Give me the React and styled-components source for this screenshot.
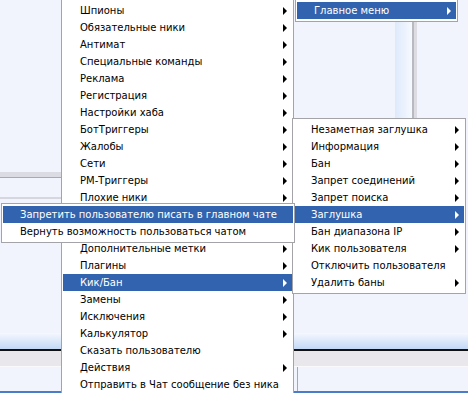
import styled, { createGlobalStyle } from 'styled-components';

const GlobalStyle = createGlobalStyle`
  html, body {
    margin: 0;
    padding: 0;
    background: #f1f4fd;
  }
`;

const Screen = styled.div`
  position: relative;
  width: 468px;
  height: 393px;
  overflow: hidden;
  background: #f1f4fd;
  display: flex;
  flex-direction: column;
  font-family: 'DejaVu Sans', 'Liberation Sans', sans-serif;
  font-size: 10px;
`;

const Workspace = styled.div`
  height: 333px;
  display: flex;
`;

const LeftPane = styled.div`
  width: 297px;
  display: flex;
  flex-direction: column;
`;

const PaneBlock = styled.div`
  height: ${props => props.$h}px;
  background: #f1f4fd;
`;

const Band = styled.div`
  height: 5px;
  background: #dadbe3;
  border-bottom: 1px solid #a9a9b2;
`;

const ThinLine = styled.div`
  height: 2px;
  background: #d6d7de;
`;

const RightPane = styled.div`
  flex: 1;
  display: flex;
  align-items: flex-start;
  padding-left: 98px;
`;

const ScrollStrip = styled.div`
  width: 17px;
  height: 200px;
  background: linear-gradient(to right, #dde9fb, #f6f9ff);
`;

const SplitLine = styled.div`
  width: 2px;
  height: 200px;
  background: #b9b9c1;
  border-right: 3px solid #dcdce2;
`;

const HeaderBar = styled.div`
  height: 16px;
  background: linear-gradient(to bottom, #f5f8fe, #c3d8f5);
  border-bottom: 2px solid #111;
`;

const GrayRow = styled.div`
  height: 15px;
  background: #e9e7ec;
  border-bottom: 1px solid #f9f9fb;
`;

const ListArea = styled.div`
  flex: 1;
  display: flex;
  border-bottom: 2px solid #4a7cc8;
`;

const ListColumn = styled.div`
  width: 297px;
  border-right: 1px solid #a8a8b4;
`;

const Menu = styled.div`
  position: absolute;
  left: ${props => props.$x}px;
  top: ${props => props.$y}px;
  width: ${props => props.$w}px;
  box-sizing: border-box;
  background: #ffffff;
  border: 1px solid #a3a3a8;
  padding: 2px 1px;
  display: flex;
  flex-direction: column;
  z-index: ${props => props.$z};
`;

const Item = styled.div`
  height: 17px;
  display: flex;
  align-items: center;
  justify-content: space-between;
  padding: 0 5px 0 17px;
  color: ${props => (props.$active ? '#ffffff' : '#000000')};
  background: ${props => (props.$active ? '#3263ae' : 'transparent')};
  white-space: nowrap;
`;

const Arrow = styled.span`
  width: 0;
  height: 0;
  border-left: 4px solid ${props => (props.$active ? '#ffffff' : '#000000')};
  border-top: 4px solid transparent;
  border-bottom: 4px solid transparent;
`;

const MenuItem = ({ label, sub, active }) => (
  <Item $active={active}>
    <span>{label}</span>
    {sub && <Arrow $active={active} />}
  </Item>
);

// two rows of the main menu lie under the open "Заглушка" submenu
const mainItems = [
  ['Шпионы', true],
  ['Обязательные ники', true],
  ['Антимат', true],
  ['Специальные команды', true],
  ['Реклама', true],
  ['Регистрация', true],
  ['Настройки хаба', true],
  ['БотТриггеры', true],
  ['Жалобы', true],
  ['Сети', true],
  ['PM-Триггеры', true],
  ['Плохие ники', true],
  ['', true],
  ['', true],
  ['Дополнительные метки', true],
  ['Плагины', true],
  ['Кик/Бан', true, true],
  ['Замены', true],
  ['Исключения', true],
  ['Калькулятор', true],
  ['Сказать пользователю', false],
  ['Действия', true],
  ['Отправить в Чат сообщение без ника', false]
];

const kickItems = [
  ['Незаметная заглушка', true],
  ['Информация', true],
  ['Бан', true],
  ['Запрет соединений', true],
  ['Запрет поиска', true],
  ['Заглушка', true, true],
  ['Бан диапазона IP', true],
  ['Кик пользователя', true],
  ['Отключить пользователя', false],
  ['Удалить баны', true]
];

const muteItems = [
  ['Запретить пользователю писать в главном чате', false, true],
  ['Вернуть возможность пользоваться чатом', false]
];

const renderItems = items =>
  items.map(([label, sub, active], i) => (
    <MenuItem key={i} label={label} sub={sub} active={active} />
  ));

const App = () => {
  return (
    <Screen>
      <GlobalStyle />
      <Workspace>
        <LeftPane>
          <PaneBlock $h={172} />
          <Band />
          <PaneBlock $h={19} />
          <ThinLine />
        </LeftPane>
        <RightPane>
          <ScrollStrip />
          <SplitLine />
        </RightPane>
      </Workspace>
      <HeaderBar />
      <GrayRow />
      <ListArea>
        <ListColumn />
      </ListArea>

      <Menu $x={61} $y={-1} $w={233} $z={1}>
        {renderItems(mainItems)}
      </Menu>
      <Menu $x={295} $y={-1} $w={163} $z={1}>
        {renderItems([['Главное меню', true, true]])}
      </Menu>
      <Menu $x={292} $y={118} $w={174} $z={2}>
        {renderItems(kickItems)}
      </Menu>
      <Menu $x={1} $y={203} $w={294} $z={3}>
        {renderItems(muteItems)}
      </Menu>
    </Screen>
  );
};

export default App;
